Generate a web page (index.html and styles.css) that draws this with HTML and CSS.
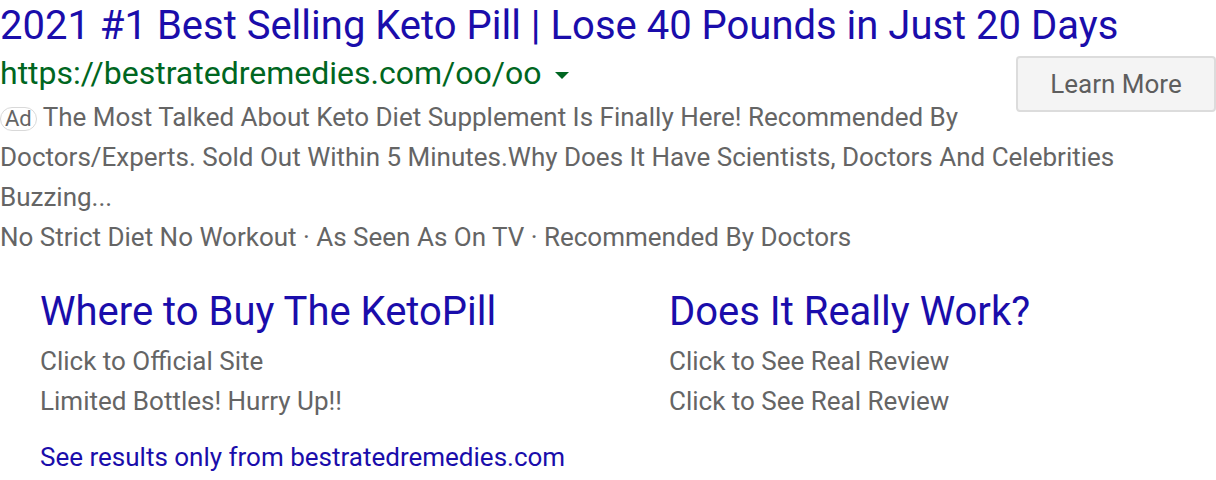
FILE: index.html
```html
<!DOCTYPE html>
<html>
<head>
<meta charset="utf-8">
<link rel="stylesheet" href="styles.css">
</head>
<body>
<div class="ad">
  <h3 class="title"><a href="#">2021 #1 Best Selling Keto Pill | Lose 40 Pounds in Just 20 Days</a></h3>
  <a class="learn" href="#">Learn More</a>
  <div class="url">https://bestratedremedies.com/oo/oo<span class="caret"></span></div>
  <div class="desc first"><span class="badge">Ad</span> The Most Talked About Keto Diet Supplement Is Finally Here! Recommended By Doctors/Experts. Sold Out Within 5 Minutes.Why Does It Have Scientists, Doctors And Celebrities Buzzing...</div>
  <div class="desc">No Strict Diet No Workout · As Seen As On TV · Recommended By Doctors</div>
  <div class="sitelinks">
    <div class="sl">
      <a class="sl-title" href="#">Where to Buy The KetoPill</a>
      <div class="sl-line">Click to Official Site</div>
      <div class="sl-line">Limited Bottles! Hurry Up!!</div>
    </div>
    <div class="sl">
      <a class="sl-title" href="#">Does It Really Work?</a>
      <div class="sl-line">Click to See Real Review</div>
      <div class="sl-line">Click to See Real Review</div>
    </div>
  </div>
  <a class="see" href="#">See results only from bestratedremedies.com</a>
</div>
</body>
</html>
```
FILE: styles.css
```css
html, body {
  margin: 0;
  padding: 0;
  background: #fff;
}
body {
  font-family: Roboto, "Liberation Sans", Arial, sans-serif;
  width: 1216px;
}
a {
  text-decoration: none;
}
.ad {
  display: flow-root;
}
.title {
  margin: 0;
  font-size: 40px;
  font-weight: 400;
  line-height: 52px;
  white-space: nowrap;
}
.title a {
  color: #1a0dab;
}
.learn {
  float: right;
  box-sizing: border-box;
  width: 200px;
  height: 56px;
  margin: 4px 0 8px 24px;
  background: #f4f4f4;
  border: 2px solid #dcdcdc;
  border-radius: 4px;
  color: #5e5e5e;
  font-size: 26px;
  line-height: 52px;
  text-align: center;
}
.url {
  color: #006621;
  font-size: 32px;
  line-height: 42px;
}
.caret {
  display: inline-block;
  width: 0;
  height: 0;
  margin-left: 13px;
  border-left: 7px solid transparent;
  border-right: 7px solid transparent;
  border-top: 7px solid #006621;
  vertical-align: 5px;
}
.desc {
  color: #656565;
  font-size: 26px;
  line-height: 40px;
}
.desc.first {
  margin-top: 3px;
}
.badge {
  display: inline-block;
  box-sizing: border-box;
  height: 24px;
  padding: 0 4px;
  border: 1.5px solid #d9d9d9;
  border-radius: 12px;
  font-size: 22px;
  line-height: 21px;
  color: #656565;
  vertical-align: 0;
}
.sitelinks {
  display: grid;
  grid-template-columns: 629px 1fr;
  padding-left: 40px;
  margin-top: 29px;
}
.sl {
  display: flex;
  flex-direction: column;
}
.sl-title {
  color: #1a0dab;
  font-size: 40px;
  line-height: 52px;
  margin-bottom: 3px;
}
.sl-line {
  color: #656565;
  font-size: 26px;
  line-height: 40px;
}
.see {
  display: block;
  margin: 16px 0 0 40px;
  color: #1a0dab;
  font-size: 26px;
  line-height: 40px;
}
```
